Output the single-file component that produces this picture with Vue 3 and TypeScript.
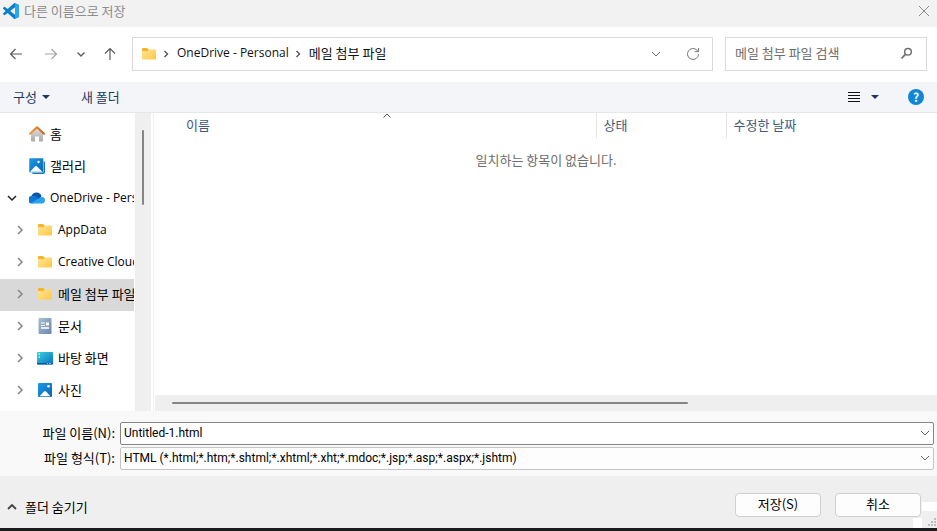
<script setup lang="ts">
import { ref } from 'vue'

type IconName = 'home' | 'gallery' | 'cloud' | 'folder' | 'document' | 'desktop' | 'pictures'

interface TreeNode {
  label: string
  icon: IconName
  child?: boolean
  open?: boolean
  expandable?: boolean
  latin?: boolean
}

const nodes: TreeNode[] = [
  { label: '홈', icon: 'home' },
  { label: '갤러리', icon: 'gallery' },
  { label: 'OneDrive - Personal', icon: 'cloud', expandable: true, open: true, latin: true },
  { label: 'AppData', icon: 'folder', child: true, expandable: true, latin: true },
  { label: 'Creative Cloud', icon: 'folder', child: true, expandable: true, latin: true },
  { label: '메일 첨부 파일', icon: 'folder', child: true, expandable: true },
  { label: '문서', icon: 'document', child: true, expandable: true },
  { label: '바탕 화면', icon: 'desktop', child: true, expandable: true },
  { label: '사진', icon: 'pictures', child: true, expandable: true },
]

const selected = ref('메일 첨부 파일')
const fileName = ref('Untitled-1.html')
const search = ref('')
const fileTypes = ['HTML (*.html;*.htm;*.shtml;*.xhtml;*.xht;*.mdoc;*.jsp;*.asp;*.aspx;*.jshtm)']
const fileType = ref(fileTypes[0])
</script>

<template>
  <div class="dialog">
    <svg class="defs" aria-hidden="true">
      <defs>
        <linearGradient id="g-folder" x1="0" y1="0" x2="1" y2="1">
          <stop offset="0" stop-color="#ffe49a" />
          <stop offset="1" stop-color="#fdc93f" />
        </linearGradient>
        <linearGradient id="g-blue" x1="0" y1="0" x2="1" y2="1">
          <stop offset="0" stop-color="#1c9be6" />
          <stop offset="1" stop-color="#0564b8" />
        </linearGradient>
        <linearGradient id="g-roof" x1="0" y1="0" x2="1" y2="0">
          <stop offset="0" stop-color="#f29a3c" />
          <stop offset="1" stop-color="#d65a1c" />
        </linearGradient>
        <linearGradient id="g-wall" x1="0" y1="0" x2="0" y2="1">
          <stop offset="0" stop-color="#dedede" />
          <stop offset="1" stop-color="#a9a9a9" />
        </linearGradient>
        <linearGradient id="g-desk" x1="0" y1="0" x2="1" y2="1">
          <stop offset="0" stop-color="#35d3dc" />
          <stop offset="1" stop-color="#0b6fc0" />
        </linearGradient>
        <linearGradient id="g-doc" x1="0" y1="0" x2="1" y2="1">
          <stop offset="0" stop-color="#a9bfd4" />
          <stop offset="1" stop-color="#6b87a6" />
        </linearGradient>
        <symbol id="i-folder" viewBox="0 0 16 16">
          <path d="M1 3q0-1 1-1h4l2 2v3H1z" fill="#f5b32a" />
          <path d="M1 5h5.500L8 3.500h6q1 0 1 1v8q0 1-1 1H2q-1 0-1-1z" fill="url(#g-folder)" />
        </symbol>
        <symbol id="i-home" viewBox="0 0 16 16">
          <path d="M2 7l6-5 6 5v7.500q0 1-1 1h-3v-5H6v5H3q-1 0-1-1z" fill="url(#g-wall)" />
          <path d="M1 7.800L8 1.300l7 6.500" fill="none" stroke="url(#g-roof)" stroke-width="2" stroke-linecap="round" stroke-linejoin="round" />
        </symbol>
        <symbol id="i-gallery" viewBox="0 0 16 16">
          <path d="M3 3h11.500q1.500 0 1.500 1.500V14q0 2-2 2H4.500Q3 16 3 14.500z" fill="#1473b8" />
          <rect width="14.500" height="14.500" rx="1" fill="url(#g-blue)" stroke="#fff" stroke-width=".5" />
          <path d="M1 13.800l5-5.300q1-1 2 0l5.500 5.300z" fill="#fff" />
          <circle cx="9.500" cy="4" r="1.200" fill="#fff" />
        </symbol>
        <symbol id="i-pictures" viewBox="0 0 16 16">
          <rect x="1" y="1" width="14" height="14" rx="1" fill="url(#g-blue)" />
          <path d="M2.500 14.200l4.500-4.700q1-1 2 0l4.500 4.700z" fill="#fff" />
          <circle cx="11.500" cy="4.300" r="1.300" fill="#fff" />
        </symbol>
        <symbol id="i-cloud" viewBox="0 0 16 16">
          <path d="M3.500 13A3.700 3.700 0 0 1 2.500 6 5.300 5.300 0 0 1 12.500 6L9 12z" fill="#0a56ac" />
          <path d="M3.200 13.400A3.700 3.700 0 0 1 2.500 6q3-.800 5.500 1l5 5z" fill="#0f78d4" />
          <path d="M2.300 13L11.500 7.200Q15.500 6 16 10q0 3.400-3 3.400H4q-1 0-1.700-.400z" fill="#29a3ea" />
        </symbol>
        <symbol id="i-document" viewBox="0 0 16 16">
          <rect x="1.500" width="13" height="16" rx="1" fill="url(#g-doc)" />
          <path d="M4 5h4M4 7.500h4" stroke="#fff" />
          <rect x="9" y="4.500" width="3" height="3" fill="#fff" />
          <rect x="4" y="9" width="8" height="2" fill="#e4ebf2" />
        </symbol>
        <symbol id="i-desktop" viewBox="0 0 16 16">
          <rect y="2" width="16" height="12.500" rx="1" fill="url(#g-desk)" />
          <path d="M0 13h16v.500q0 1-1 1H1q-1 0-1-1z" fill="#10569b" />
          <path d="M1.500 4h1.500M1.500 7h1.500" stroke="#b7f3f5" stroke-width="1.500" />
          <path d="M10 13.700h1M12 13.700h2" stroke="#9bd2f5" />
        </symbol>
      </defs>
    </svg>

    <header class="titlebar">
      <svg class="logo" viewBox="0 0 24 24" aria-hidden="true">
        <path
          fill="#0a7fcb"
          fill-rule="evenodd"
          d="M23.150 2.587L18.210.210a1.494 1.494 0 0 0-1.705.290l-9.460 8.630-4.120-3.128a.999.999 0 0 0-1.276.057L.327 7.261A1 1 0 0 0 .326 8.740L3.899 12 .326 15.260a1 1 0 0 0 .001 1.479L1.650 17.940a.999.999 0 0 0 1.276.057l4.120-3.128 9.460 8.630a1.492 1.492 0 0 0 1.704.290l4.942-2.377A1.500 1.500 0 0 0 24 20.060V3.939a1.500 1.500 0 0 0-.850-1.352zm-5.146 14.861L10.826 12l7.178-5.448v10.896z"
        />
        <path fill="#2aa5ee" d="M18 .200l5.150 2.387Q24 3 24 3.939V20.060q0 .940-.850 1.352L18 23.800z" />
      </svg>
      <h1>다른 이름으로 저장</h1>
      <button class="close" type="button" aria-label="닫기">
        <svg width="12" height="12" viewBox="0 0 12 12"><path d="M1 1l10 10M11 1L1 11" stroke="#8a8a8a" /></svg>
      </button>
    </header>

    <nav class="navbar">
      <button class="icon-btn" type="button" aria-label="뒤로">
        <svg viewBox="0 0 14 14"><path d="M13 7H1.500M6.500 2l-5 5 5 5" stroke="#5c5c5c" stroke-width="1.200" /></svg>
      </button>
      <button class="icon-btn forward" type="button" aria-label="앞으로">
        <svg viewBox="0 0 14 14"><path d="M1 7h11.500M7.500 2l5 5-5 5" stroke="#a3a3a3" stroke-width="1.200" /></svg>
      </button>
      <button class="icon-btn recent" type="button" aria-label="최근 위치">
        <svg viewBox="0 0 14 14"><path d="M3.500 5.500L7 9l3.500-3.500" stroke="#5c5c5c" stroke-width="1.400" /></svg>
      </button>
      <button class="icon-btn up" type="button" aria-label="위로">
        <svg viewBox="0 0 14 14"><path d="M7 13V1.500M2 6.500l5-5 5 5" stroke="#5c5c5c" stroke-width="1.200" /></svg>
      </button>

      <div class="address">
        <svg class="icon" aria-hidden="true"><use href="#i-folder" /></svg>
        <svg class="sep" viewBox="0 0 6 8"><path d="M1.500 1l3 3-3 3" /></svg>
        <a class="latin" href="#">OneDrive - Personal</a>
        <svg class="sep" viewBox="0 0 6 8"><path d="M1.500 1l3 3-3 3" /></svg>
        <a href="#">메일 첨부 파일</a>
        <button class="history" type="button" aria-label="이전 위치">
          <svg width="10" height="8" viewBox="0 0 10 8"><path d="M1 2l4 4 4-4" stroke="#707070" /></svg>
        </button>
        <button class="refresh" type="button" aria-label="새로 고침">
          <svg width="14" height="14" viewBox="0 0 14 14">
            <path d="M12.500 7A5.500 5.500 0 1 1 11 3.200L12.300 4.500M12.500 1v3.700H8.800" stroke="#777" />
          </svg>
        </button>
      </div>

      <div class="search">
        <input v-model="search" type="text" placeholder="메일 첨부 파일 검색" aria-label="메일 첨부 파일 검색" />
        <svg width="13" height="13" viewBox="0 0 13 13" aria-hidden="true">
          <circle cx="8" cy="4.700" r="3.300" fill="none" stroke="#707070" stroke-width="1.500" />
          <path d="M5.600 7.200L1.500 11.500" stroke="#707070" stroke-width="1.800" />
        </svg>
      </div>
    </nav>

    <div class="toolbar">
      <button type="button">구성 <i class="caret"></i></button>
      <button class="new-folder" type="button">새 폴더</button>
      <button class="view" type="button" aria-label="보기 변경">
        <svg width="14" height="14" viewBox="0 0 14 14"><path d="M1 2.500h12M1 5.500h12M1 8.500h12M1 11.500h12" stroke="#111" /></svg>
        <i class="caret"></i>
      </button>
      <button class="help" type="button" aria-label="도움말">?</button>
    </div>

    <main class="body">
      <div class="tree">
        <ul>
          <li
            v-for="node in nodes"
            :key="node.label"
            :class="{ child: node.child, selected: node.label === selected }"
            @click="selected = node.label"
          >
            <button v-if="node.expandable" class="twisty" type="button" :aria-label="node.label + ' 펼치기'">
              <svg v-if="node.open" width="10" height="8" viewBox="0 0 10 8"><path d="M1 2l4 4 4-4" stroke="#222" stroke-width="1.500" /></svg>
              <svg v-else width="8" height="10" viewBox="0 0 8 10"><path d="M2 1l4 4-4 4" stroke="#858585" stroke-width="1.500" /></svg>
            </button>
            <span v-else class="twisty"></span>
            <svg class="icon" aria-hidden="true"><use :href="'#i-' + node.icon" /></svg>
            <span class="label" :class="{ latin: node.latin }">{{ node.label }}</span>
          </li>
        </ul>
      </div>
      <div class="vscroll"><i></i></div>

      <section class="files">
        <table>
          <thead>
            <tr>
              <td class="gutter"></td>
              <th class="name" scope="col">
                이름
                <svg class="sort" width="8" height="5" viewBox="0 0 8 5"><path d="M.500 4.500L4 1l3.500 3.500" stroke="#555" /></svg>
              </th>
              <th class="state" scope="col">상태</th>
              <th scope="col">수정한 날짜</th>
            </tr>
          </thead>
          <tbody>
            <tr><td class="empty" colspan="4">일치하는 항목이 없습니다.</td></tr>
          </tbody>
        </table>
        <div class="hscroll"><i></i></div>
      </section>
    </main>

    <form class="fields" @submit.prevent>
      <label for="file-name">파일 이름(N):</label>
      <div class="combo active">
        <input id="file-name" v-model="fileName" type="text" />
        <svg width="10" height="8" viewBox="0 0 10 8"><path d="M1 2l4 4 4-4" stroke="#606060" /></svg>
      </div>
      <label for="file-type">파일 형식(T):</label>
      <div class="combo">
        <select id="file-type" v-model="fileType">
          <option v-for="t in fileTypes" :key="t">{{ t }}</option>
        </select>
        <svg width="10" height="8" viewBox="0 0 10 8"><path d="M1 2l4 4 4-4" stroke="#606060" /></svg>
      </div>
    </form>

    <footer class="footer">
      <button class="hide" type="button">
        <svg width="10" height="8" viewBox="0 0 10 8"><path d="M1 6l4-4 4 4" stroke="#444" stroke-width="1.800" /></svg>
        폴더 숨기기
      </button>
      <button class="action" type="button">저장(S)</button>
      <button class="action" type="button">취소</button>
      <svg class="grip" width="24" height="26" viewBox="0 0 24 26" aria-hidden="true">
        <path d="M9 0h15v9H9zM0 16h9v10H0z" fill="#fff" />
        <path d="M21 16h2v2h-2zM18 19h2v2h-2zM21 19h2v2h-2zM15 22h2v2h-2zM18 22h2v2h-2zM21 22h2v2h-2z" fill="#bdbdbd" />
      </svg>
    </footer>
  </div>
</template>

<style>
body {
  background: #fff;
}
</style>

<style scoped>
* {
  box-sizing: border-box;
}
.dialog {
  display: flex;
  flex-direction: column;
  height: 100vh;
  border-bottom: 3px solid #1b1b1d;
  font: 13px/16px 'Noto Sans CJK KR', sans-serif;
  color: #1a1a1a;
}
.defs {
  position: absolute;
  width: 0;
  height: 0;
}
svg {
  flex: none;
  fill: none;
}
button,
input,
select {
  margin: 0;
  padding: 0;
  border: 0;
  background: none;
  font: inherit;
  color: inherit;
}
a {
  color: inherit;
  text-decoration: none;
}
.icon {
  width: 16px;
  height: 16px;
}

.titlebar {
  display: flex;
  align-items: center;
  height: 27px;
  padding: 0 7px 5px 3px;
  background: #f2f2f2;
  color: #8c8c8c;
}
.logo {
  width: 16px;
  height: 16px;
}
h1 {
  margin: 0 auto 0 5px;
  font-size: 13px;
  font-weight: 400;
}
.close {
  display: flex;
}

.navbar {
  display: flex;
  align-items: center;
  height: 55px;
  padding: 0 10px 2px 9px;
}
.icon-btn {
  display: flex;
  width: 14px;
  margin-right: 21px;
}
.icon-btn svg {
  width: 14px;
  height: 14px;
}
.icon-btn.forward {
  margin-right: 16px;
}
.icon-btn.recent,
.icon-btn.up {
  margin-right: 15px;
}
.address,
.search {
  display: flex;
  align-items: center;
  height: 34px;
  border: 1px solid #d9d9d9;
}
.address {
  flex: 1;
  padding: 0 12px 0 8px;
  color: #111;
}
.address a {
  padding-bottom: 2px;
}
.sep {
  width: 6px;
  height: 8px;
  margin: 0 8px 0 6px;
  stroke: #555;
  stroke-width: 1.4;
}
.history {
  display: flex;
  margin-left: auto;
}
.refresh {
  display: flex;
  margin-left: 25px;
}
.search {
  width: 202px;
  margin-left: 12px;
  padding: 0 13px 0 9px;
}
.search input {
  flex: 1;
  min-width: 0;
  padding-bottom: 2px;
  outline: 0;
}
.search input::placeholder {
  color: #6d6d6d;
  opacity: 1;
}

.toolbar {
  display: flex;
  align-items: center;
  height: 31px;
  padding: 0 13px 1px;
  border-bottom: 1px solid #e5e7e9;
  background: #f4f5f8;
  color: #1e395b;
}
.toolbar button {
  display: flex;
  align-items: center;
  gap: 5px;
}
.caret {
  border: 4px solid transparent;
  border-top-color: #1e395b;
  border-bottom: 0;
}
.new-folder {
  margin-left: 31px;
}
.toolbar .view {
  gap: 10px;
  margin-left: auto;
}
.toolbar .help {
  justify-content: center;
  width: 16px;
  height: 16px;
  margin-left: 29px;
  border-radius: 50%;
  background: #0f87d8;
  color: #fff;
  font-size: 12px;
  font-weight: 700;
}

.body {
  display: flex;
  flex: 1;
  min-height: 0;
}
.tree {
  width: 135px;
  padding: 6px 1px 0 0;
  overflow: hidden;
}
ul {
  margin: 0;
  padding: 0;
  list-style: none;
}
li {
  display: flex;
  align-items: center;
  height: 32px;
  padding: 0 0 2px 5px;
  white-space: nowrap;
  overflow: hidden;
}
li.child {
  padding-left: 13px;
}
.selected {
  background: #d9d9d9;
}
.twisty {
  display: flex;
  justify-content: center;
  flex: none;
  width: 13px;
  margin-right: 11px;
}
.label {
  margin-left: 5px;
  color: #000;
}
.latin {
  font-family: 'Open Sans', 'Noto Sans CJK KR', sans-serif;
  font-size: 12px;
}
.vscroll {
  width: 16px;
  padding: 17px 7px;
  background: #efefef;
}
.vscroll i {
  display: block;
  width: 2px;
  height: 75px;
  border-radius: 1px;
  background: #858585;
}
.files {
  display: flex;
  flex-direction: column;
  flex: 1;
  margin-left: 2px;
  padding-left: 1px;
  border-left: 1px solid #f0f0f0;
}
table {
  width: 100%;
  border-collapse: collapse;
  table-layout: fixed;
}
th,
td {
  padding: 0;
  height: 25px;
  font-weight: 400;
  text-align: left;
}
th {
  position: relative;
  padding: 0 0 1px 7px;
  color: #44597a;
}
.gutter {
  width: 24px;
}
.name {
  width: 417px;
}
.state {
  width: 130px;
}
.name,
.state {
  border-right: 1px solid #e5e5e5;
}
.sort {
  position: absolute;
  top: 0;
  left: calc(50% - 4px);
}
.empty {
  height: 44px;
  color: #6d6d6d;
  text-align: center;
}
.hscroll {
  margin-top: auto;
  padding: 7px 17px;
  background: #efefef;
}
.hscroll i {
  display: block;
  width: 69%;
  height: 2px;
  border-radius: 1px;
  background: #858585;
}

.fields {
  display: grid;
  grid-template-columns: 115px 1fr;
  gap: 2px 5px;
  align-items: center;
  padding: 11px 3px 6px 0;
  background: #f9f9f9;
  color: #000;
}
.fields label {
  padding-bottom: 1px;
  text-align: right;
}
.combo {
  display: flex;
  align-items: center;
  height: 23px;
  padding: 0 3px 1px;
  border: 1px solid #c4c4c4;
  border-radius: 2px;
  background: #fdfdfd;
  font-family: Roboto, 'Noto Sans CJK KR', sans-serif;
  font-size: 12px;
}
.combo.active {
  border-color: #858585;
  background: #fff;
}
.combo input,
.combo select {
  flex: 1;
  min-width: 0;
  outline: 0;
  appearance: none;
}

.footer {
  position: relative;
  display: flex;
  align-items: center;
  height: 52px;
  padding: 0 16px 0 7px;
  background: #efefef;
  color: #000;
}
.hide {
  display: flex;
  align-items: center;
  gap: 8px;
  margin: 10px auto 0 0;
}
.action {
  z-index: 1;
  width: 86px;
  height: 24px;
  margin: 5px 0 0 14px;
  padding-bottom: 1px;
  border: 1px solid #cfcfcf;
  border-radius: 4px;
  background: #fdfdfd;
}
.grip {
  position: absolute;
  right: 0;
  bottom: 0;
}
</style>
